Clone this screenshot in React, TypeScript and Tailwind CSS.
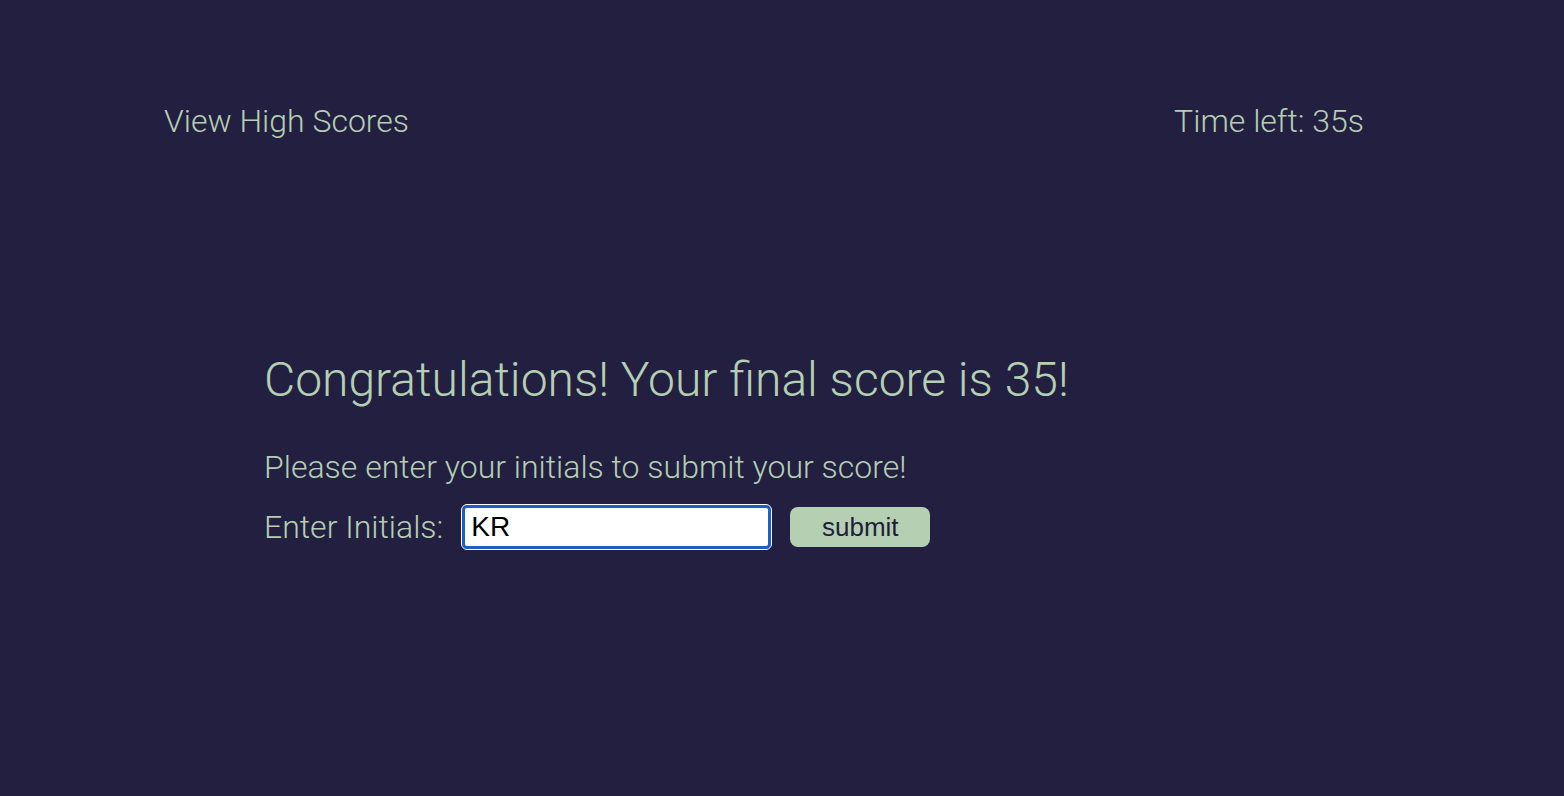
import * as React from "react";

export default function App() {
    const [initials, setInitials] = React.useState("KR");

    return (
        <div className="min-h-[796px] w-full bg-[#221f41] text-[#b4cfb1]" style={{ fontFamily: "Roboto, 'Open Sans', sans-serif" }}>
            <header className="flex w-[1200px] items-center justify-between pl-[164px] pt-[100px] box-content">
                <a href="#" className="text-[32px] font-light leading-[42px] text-[#b4cfb1]">
                    View High Scores
                </a>
                <span className="text-[32px] font-light leading-[42px]">Time left: 35s</span>
            </header>

            <main className="pl-[264px] pt-[208px]">
                <h1 className="text-[48px] font-light leading-[60px]">
                    Congratulations! Your final score is 35!
                </h1>
                <p className="mt-[36px] text-[32px] font-light leading-[42px]">
                    Please enter your initials to submit your score!
                </p>
                <form className="mt-[17px] flex items-center" onSubmit={(e) => e.preventDefault()}>
                    <label htmlFor="initials" className="text-[32px] font-light leading-[42px]">
                        Enter Initials:
                    </label>
                    <input
                        id="initials"
                        autoFocus
                        value={initials}
                        onChange={(e) => setInitials(e.target.value)}
                        className="ml-[19px] h-[44px] w-[309px] rounded-[5px] border-[3px] border-[#1b5fc8] bg-white px-[6px] text-[28px] text-black caret-black outline outline-1 outline-white"
                        style={{ fontFamily: "'Liberation Sans', Arial, sans-serif" }}
                    />
                    <button
                        type="submit"
                        className="ml-[19px] h-[40px] w-[140px] rounded-[8px] bg-[#b4cfb1] text-[26px] leading-none text-[#1f1d3d]"
                        style={{ fontFamily: "'Liberation Sans', Arial, sans-serif" }}
                    >
                        submit
                    </button>
                </form>
            </main>
        </div>
    );
}
